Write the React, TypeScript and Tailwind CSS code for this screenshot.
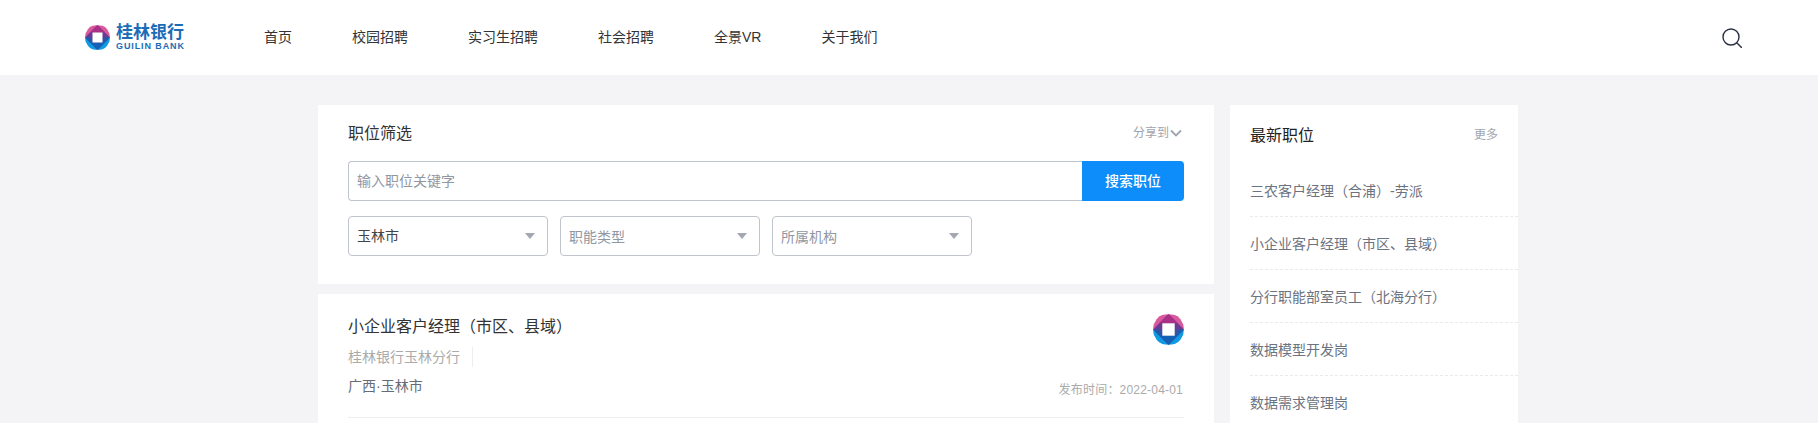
const cjk = "font-['Liberation_Sans','Noto_Sans_CJK_SC',sans-serif]";

function Mark({ size, id }: { size: number; id: string }) {
  return (
    <svg width={size} height={size} viewBox="0 0 30 30" className="block shrink-0">
      <defs>
        <clipPath id={id}>
          <path d="M9 1 Q15 -0.6 21 1 Q24.5 2 26.5 5 L29.2 10 Q30.4 15 29.2 20 L26.5 25 Q24.5 28 21 29 Q15 30.6 9 29 Q5.5 28 3.5 25 L0.8 20 Q-0.4 15 0.8 10 L3.5 5 Q5.5 2 9 1 Z" />
        </clipPath>
      </defs>
      <g clipPath={`url(#${id})`}>
        <rect x="0" y="0" width="30" height="15" fill="#d85a9c" />
        <rect x="0" y="15" width="30" height="15" fill="#0f9be3" />
        <path d="M0 15 L15 0 L30 15 L15 30 Z" fill="#6b3b93" />
        <path d="M6 9 L15 0 L24 9 Z" fill="#ab2f86" />
        <path d="M0 15 H30 L15 30 Z" fill="#1261b5" />
        <path d="M3 15 H27 L21 21 H9 Z" fill="#3f4f9f" />
        <rect x="9" y="9" width="12" height="12" fill="#ffffff" />
      </g>
    </svg>
  );
}

function Select({ label, active }: { label: string; active?: boolean }) {
  return (
    <div className="flex h-10 w-[200px] items-center justify-between rounded border border-[#c0c4cc] bg-white pl-2 pr-3">
      <span className={`text-sm ${active ? "text-[#444444]" : "pt-[2px] text-[#9097a3]"}`}>{label}</span>
      <svg width="10" height="6" viewBox="0 0 10 6"><path d="M0 0H10L5 6Z" fill="#a3a7b0" /></svg>
    </div>
  );
}

const nav = ["首页", "校园招聘", "实习生招聘", "社会招聘", "全景VR", "关于我们"];
const jobs = ["三农客户经理（合浦）-劳派", "小企业客户经理（市区、县域）", "分行职能部室员工（北海分行）", "数据模型开发岗", "数据需求管理岗"];

export default function App() {
  return (
    <div className={`h-[423px] overflow-hidden bg-[#f4f4f6] ${cjk}`}>
      <header className="flex h-[75px] items-center bg-white pl-[85px] pr-[76px]">
        <div className="flex w-[99px] items-center gap-[6px]">
          <Mark size={25} id="m1" />
          <div className="flex flex-col text-[#1c6cb6]">
            <span className="whitespace-nowrap text-[17px] font-bold leading-[15px]">桂林银行</span>
            <span className="mt-[2px] whitespace-nowrap text-[9px] font-bold leading-[8px] tracking-[0.9px]">GUILIN BANK</span>
          </div>
        </div>
        <nav className="ml-20 flex gap-[60px] pb-[2px] text-sm text-[#333333]">
          {nav.map((n) => <span key={n} className="whitespace-nowrap">{n}</span>)}
        </nav>
        <svg className="ml-auto" width="20" height="20" viewBox="0 0 20 20" fill="none" stroke="#2a3142" strokeWidth="1.4">
          <circle cx="9" cy="9" r="8" />
          <path d="M15 15L19.5 19.5" strokeLinecap="round" />
        </svg>
      </header>

      <main className="ml-[318px] mt-[30px] flex w-[1200px] gap-4">
        <div className="flex w-[896px] flex-col gap-[10px]">
          <section className="h-[179px] bg-white px-[30px]">
            <div className="flex h-14 items-center justify-between pr-[2px]">
              <h2 className="pt-[2px] text-base text-[#333333]">职位筛选</h2>
              <span className="flex items-center gap-[1px] text-xs text-[#a0a4ad]">
                分享到
                <svg width="12" height="8" viewBox="0 0 12 8" fill="none" stroke="#a0a4ad" strokeWidth="1.8"><path d="M1 1.5L6 6.5L11 1.5" /></svg>
              </span>
            </div>
            <div className="flex h-10">
              <div className="flex flex-1 items-center rounded-l border border-r-0 border-[#c0c4cc] pl-2 text-sm text-[#9097a3]">输入职位关键字</div>
              <button className="w-[102px] rounded-r bg-[#0d8df9] text-sm font-medium text-white">搜索职位</button>
            </div>
            <div className="mt-[15px] flex gap-3">
              <Select label="玉林市" active />
              <Select label="职能类型" />
              <Select label="所属机构" />
            </div>
          </section>

          <section className="h-[200px] bg-white px-[30px] pt-[20px]">
            <div className="flex h-[104px] justify-between border-b border-[#eeeeee]">
              <div className="flex flex-col items-start">
                <h3 className="pt-[1px] text-base leading-6 text-[#333333]">小企业客户经理（市区、县域）</h3>
                <div className="mt-[8px] flex h-5 items-center border-r border-[#eeeeee] pr-3 text-sm text-[#aaaaaa]">桂林银行玉林分行</div>
                <div className="mt-[9px] text-sm leading-5 text-[#666b75]">广西·玉林市</div>
              </div>
              <div className="flex flex-col items-end">
                <Mark size={31} id="m2" />
                <div className="mt-[35px] pr-[1px] text-xs leading-5 tracking-[0.2px] text-[#aaaaaa]">发布时间：2022-04-01</div>
              </div>
            </div>
          </section>
        </div>

        <aside className="h-[400px] w-[288px] bg-white pl-5">
          <div className="flex h-[60px] items-center justify-between pr-5">
            <h2 className="pt-[2px] text-base text-[#222222]">最新职位</h2>
            <span className="text-xs text-[#a0a4ad]">更多</span>
          </div>
          <ul>
            {jobs.map((j) => (
              <li key={j} className="flex h-[53px] items-center border-b border-dashed border-[#e8eaee] pt-[2px] text-sm text-[#6b7280] first:h-[52px] first:pt-0">{j}</li>
            ))}
          </ul>
        </aside>
      </main>
    </div>
  );
}
